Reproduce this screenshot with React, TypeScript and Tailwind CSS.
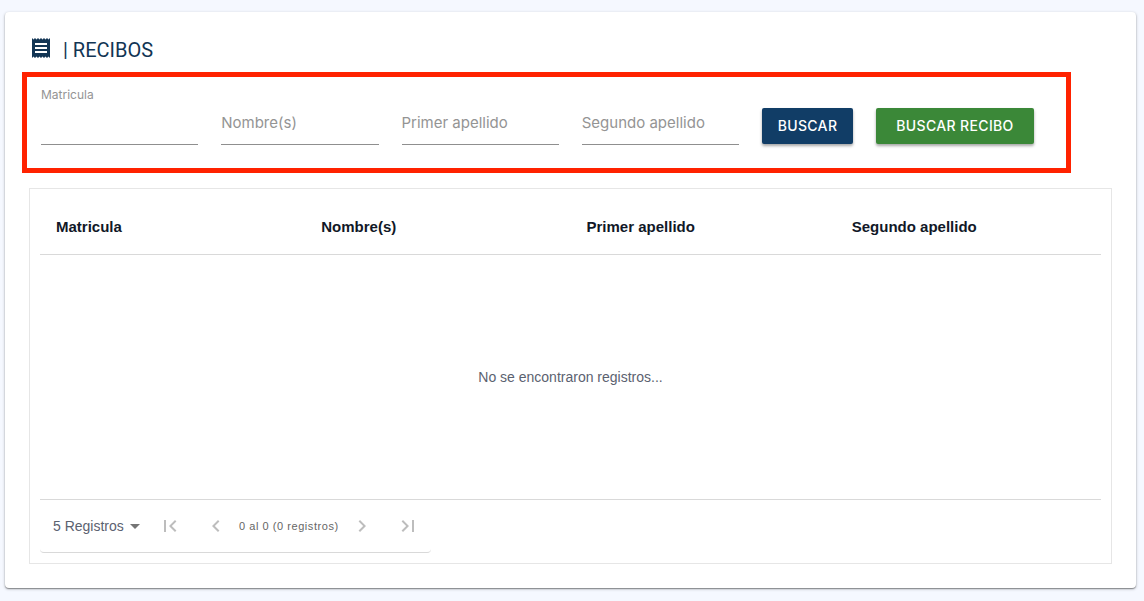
import {
  MdArrowDropDown,
  MdChevronLeft,
  MdChevronRight,
  MdFirstPage,
  MdLastPage,
  MdReceipt,
} from "react-icons/md";

const columns = ["Matricula", "Nombre(s)", "Primer apellido", "Segundo apellido"];

const Field = ({ id, label, floating = false }: { id: string; label: string; floating?: boolean }) => {
  return (
    <div className="relative h-[58px] min-w-0 flex-1">
      <label
        htmlFor={id}
        className={
          floating
            ? "absolute left-0 top-0 text-xs leading-4 text-[#949494]"
            : "absolute left-0 top-6 text-[15px] leading-6 text-[#949494]"
        }
      >
        {label}
      </label>
      <input
        id={id}
        type="text"
        className="h-full w-full border-b border-[#8f8f8f] bg-transparent pt-5 text-[15px] outline-none"
      />
    </div>
  );
};

const Pagination = () => {
  return (
    <div className="flex h-[53px] w-fit items-center rounded-sm border-b border-[#d9d9d9] pl-[13px]">
      <div className="relative">
        <select
          aria-label="Registros por página"
          className="h-8 w-[94px] cursor-pointer appearance-none bg-transparent pr-5 text-sm text-[#5b6270] outline-none"
        >
          <option>5 Registros</option>
          <option>10 Registros</option>
          <option>20 Registros</option>
        </select>
        <MdArrowDropDown size={24} className="pointer-events-none absolute right-0 top-1 text-[#757575]" />
      </div>

      <button type="button" disabled aria-label="Primera página" className="flex w-[46px] justify-center text-[#bdbdbd]">
        <MdFirstPage size={24} />
      </button>
      <button type="button" disabled aria-label="Página anterior" className="flex w-[46px] justify-center text-[#bdbdbd]">
        <MdChevronLeft size={24} />
      </button>
      <span className="text-[11px] tracking-wider text-[#666666]">0 al 0 (0 registros)</span>
      <button type="button" disabled aria-label="Página siguiente" className="flex w-[46px] justify-center text-[#bdbdbd]">
        <MdChevronRight size={24} />
      </button>
      <button type="button" disabled aria-label="Última página" className="flex w-[46px] justify-center text-[#bdbdbd]">
        <MdLastPage size={24} />
      </button>
    </div>
  );
};

const App = () => {
  return (
    <div className="min-h-screen bg-[#f5f8ff] pb-3 pl-[5px] pr-2 pt-3 font-['Inter',sans-serif]">
      <main className="rounded-sm bg-white pb-6 pt-6 shadow-[0_1px_3px_rgba(0,0,0,0.3),0_1px_1px_rgba(0,0,0,0.3)]">
        <div className="flex h-6 items-center gap-2.5 pl-6 text-[#123554]">
          <MdReceipt size={24} />
          <h1 className="pt-1 font-['Roboto',sans-serif] text-xl leading-6">| RECIBOS</h1>
        </div>

        <form className="ml-[17px] mr-[65px] mt-3 flex items-end gap-[23px] border-5 border-[#ff2200] pb-[23px] pl-[14px] pr-8 pt-[10px]">
          <Field id="matricula" label="Matricula" floating />
          <Field id="nombre" label="Nombre(s)" />
          <Field id="primer-apellido" label="Primer apellido" />
          <Field id="segundo-apellido" label="Segundo apellido" />
          <button
            type="button"
            className="mb-px h-9 w-[91px] rounded-xs bg-[#113d66] text-sm font-medium tracking-wide text-white shadow-[0_2px_3px_rgba(0,0,0,0.35)]"
          >
            BUSCAR
          </button>
          <button
            type="button"
            className="mb-px h-9 w-[158px] rounded-xs bg-[#3b8838] text-sm font-medium tracking-wide text-white shadow-[0_2px_3px_rgba(0,0,0,0.35)]"
          >
            BUSCAR RECIBO
          </button>
        </form>

        <section className="mx-6 mt-[15px] border border-[#e6e6e6] p-[10px] font-['Liberation_Sans',sans-serif]">
          <table className="w-full table-fixed border-separate border-spacing-0">
            <thead>
              <tr>
                {columns.map((column) => (
                  <th
                    key={column}
                    className="h-14 border-b border-[#d9d9d9] px-4 pt-0.5 text-left text-[15px] font-bold text-[#111827]"
                  >
                    {column}
                  </th>
                ))}
              </tr>
            </thead>
            <tbody>
              <tr>
                <td
                  colSpan={4}
                  className="h-[245px] border-b border-[#d9d9d9] text-center text-sm text-[#5b6270]"
                >
                  No se encontraron registros...
                </td>
              </tr>
            </tbody>
          </table>
          <Pagination />
        </section>
      </main>
    </div>
  );
};

export default App;
